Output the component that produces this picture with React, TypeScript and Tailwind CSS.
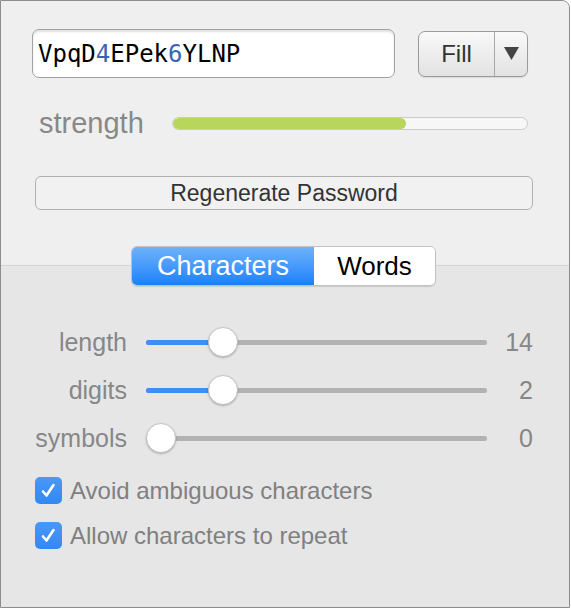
import React from "react";

const sans = "font-['Liberation_Sans',Arial,sans-serif]";

function Slider({ label, value, pos }: { label: string; value: number; pos: number }) {
  return (
    <div className="flex h-[48px] items-center">
      <div className={`w-[126px] text-right text-[25px] leading-none text-[#878787] ${sans}`}>{label}</div>
      <div className="relative ml-[19px] flex h-[30px] w-[341px] items-center">
        <div className="h-[5px] w-full rounded-full bg-[#b2b2b2]" />
        {/* blue part up to thumb */}
        <div className="absolute left-0 top-[12.5px] h-[5px] rounded-full bg-[#3d8ef5]" style={{ width: pos + 15 }} />
        <div
          className="absolute top-0 h-[30px] w-[30px] rounded-full border border-[#c4c4c4] bg-white shadow-[0_1px_2px_rgba(0,0,0,0.25)]"
          style={{ left: pos }}
        />
      </div>
      <div className={`w-[46px] text-right text-[25px] leading-none text-[#878787] ${sans}`}>{value}</div>
    </div>
  );
}

function Check({ label }: { label: string }) {
  return (
    <div className="flex h-[45px] items-center pl-[34px]">
      <div className="flex h-[27px] w-[27px] items-center justify-center rounded-[5px] bg-gradient-to-b from-[#4a98f7] to-[#3388f4]">
        <svg width="27" height="27" viewBox="0 0 27 27">
          <path d="M8 14.5 L11.5 18.5 L18.5 8" fill="none" stroke="white" strokeWidth="2.6" strokeLinecap="round" strokeLinejoin="round" />
        </svg>
      </div>
      <span className={`ml-[8px] text-[24px] leading-none text-[#808080] ${sans}`}>{label}</span>
    </div>
  );
}

export default function App() {
  return (
    <div className="h-[608px] w-[571px] bg-white">
      <div className="flex h-[608px] w-[570px] flex-col overflow-hidden rounded-tr-[8px] border border-[#8c8c8c] bg-[#e6e6e6]">
        {/* top part */}
        <div className="h-[265px] shrink-0 border-b border-[#d4d4d4] bg-[#efefef]">
          <div className="mt-[28px] flex items-center pl-[31px]">
            <div className="flex h-[49px] w-[363px] items-center rounded-[7px] border border-[#a3a3a3] bg-white pl-[5px] shadow-[inset_0_2px_2px_rgba(0,0,0,0.12)]">
              <span className="font-['DejaVu_Sans_Mono','Liberation_Mono',monospace] text-[24px] leading-none text-black">
                VpqD<span className="text-[#3c62b8]">4</span>EPek<span className="text-[#3c62b8]">6</span>YLNP
              </span>
            </div>
            <div className="ml-[23px] flex h-[46px] w-[110px] overflow-hidden rounded-[7px] border border-[#9b9b9b] bg-gradient-to-b from-[#f9f9f9] to-[#e2e2e2] shadow-[0_1px_1px_rgba(0,0,0,0.1)]">
              <div className={`flex w-[76px] items-center justify-center border-r border-[#a8a8a8] text-[24px] leading-none text-[#333] ${sans}`}>
                Fill
              </div>
              <div className="flex flex-1 items-center justify-center">
                <svg width="15" height="13" viewBox="0 0 15 13">
                  <path d="M0 0 H15 L7.5 13 Z" fill="#444" />
                </svg>
              </div>
            </div>
          </div>

          <div className="mt-[25px] flex h-[40px] items-center pl-[38px]">
            <span className={`w-[133px] text-[29px] leading-none text-[#888] ${sans}`}>strength</span>
            <div className="h-[13px] w-[356px] overflow-hidden rounded-full border border-[#cacaca] bg-[#f7f7f7]">
              <div className="h-full w-[233px] rounded-full bg-[#b7d65b]" />
            </div>
          </div>

          <div
            className={`ml-[34px] mt-[33px] flex h-[34px] w-[498px] items-center justify-center rounded-[6px] border border-[#b0b0b0] bg-[#f1f1f1] text-[23px] leading-none text-[#333] ${sans}`}
          >
            Regenerate Password
          </div>
        </div>

        {/* bottom part */}
        <div className="flex flex-1 flex-col">
          <div className="relative z-10 -mt-[20px] ml-[130px] flex h-[40px] w-[305px] overflow-hidden rounded-[6px] border border-[#c2c2c2] shadow-[0_1px_1px_rgba(0,0,0,0.12)]">
            <div className={`flex w-[182px] items-center justify-center bg-gradient-to-b from-[#6cb2fb] to-[#1680fb] text-[27px] leading-none text-white ${sans}`}>
              Characters
            </div>
            <div className={`flex flex-1 items-center justify-center bg-white text-[26px] leading-none text-black ${sans}`}>
              Words
            </div>
          </div>

          <div className="mt-[32px]">
            <Slider label="length" value={14} pos={62} />
            <Slider label="digits" value={2} pos={62} />
            <Slider label="symbols" value={0} pos={0} />
          </div>

          <div className="mt-[6px]">
            <Check label="Avoid ambiguous characters" />
            <Check label="Allow characters to repeat" />
          </div>
        </div>
      </div>
    </div>
  );
}
